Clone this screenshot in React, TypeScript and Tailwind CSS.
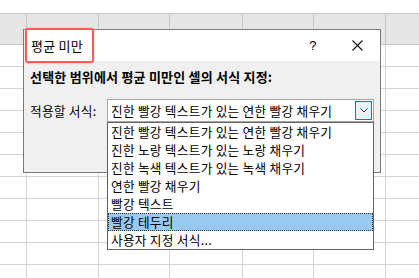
import React from "react";

const COL_WIDTHS = [
  "w-[27px]",
  "w-[72px]",
  "w-[71px]",
  "w-[73px]",
  "w-[71px]",
  "w-[72px]",
  "w-[72px]",
];

const ROWS = Array.from({ length: 11 }, (_, i) => i);

const OPTIONS = [
  "진한 빨강 텍스트가 있는 연한 빨강 채우기",
  "진한 노랑 텍스트가 있는 노랑 채우기",
  "진한 녹색 텍스트가 있는 녹색 채우기",
  "연한 빨강 채우기",
  "빨강 텍스트",
  "빨강 테두리",
  "사용자 지정 서식...",
];

const SELECTED = 5;

function Sheet() {
  return (
    <div className="flex flex-col">
      <div className="h-[14px] bg-white border-b border-[#c6c6c6]" />
      <div className="flex h-[31px] bg-[#e6e6e6] border-b border-[#c8c8c8]">
        {COL_WIDTHS.map((w, i) => (
          <div key={i} className={`${w} shrink-0 border-r border-[#c8c8c8]`} />
        ))}
      </div>
      {ROWS.map((r) => (
        <div key={r} className="flex h-[22px] border-b border-[#d4d4d4]">
          {COL_WIDTHS.map((w, i) => (
            <div key={i} className={`${w} shrink-0 border-r border-[#d4d4d4]`} />
          ))}
        </div>
      ))}
    </div>
  );
}

function CloseIcon() {
  return (
    <svg width="11" height="11" viewBox="0 0 11 11">
      <path d="M0.5 0.5 L10.5 10.5 M10.5 0.5 L0.5 10.5" stroke="#111" strokeWidth="1.1" />
    </svg>
  );
}

function Chevron() {
  return (
    <svg width="8" height="5" viewBox="0 0 8 5">
      <path d="M0.5 0.5 L4 4 L7.5 0.5" stroke="#333" strokeWidth="1" fill="none" />
    </svg>
  );
}

function Combo() {
  return (
    <div className="relative w-[267px] h-[23px]">
      <div className="flex items-center h-full bg-white border border-[#a6a6a6] pl-[3px] pr-[1px]">
        <span className="flex-1 whitespace-nowrap">{OPTIONS[0]}</span>
        <div className="w-[17px] h-[19px] flex items-center justify-center border border-[#0078d7] bg-[#e5f1fb]">
          <Chevron />
        </div>
      </div>
      {/* open dropdown list */}
      <div className="absolute left-0 top-[23px] w-[267px] h-[128px] bg-white border border-[#646464] z-10">
        {OPTIONS.map((o, i) => (
          <div
            key={o}
            className={
              i === SELECTED
                ? "h-[18px] flex items-center pl-[2px] bg-[#99c9ef] border border-dotted border-[#333] whitespace-nowrap"
                : "h-[18px] flex items-center pl-[3px] whitespace-nowrap"
            }
          >
            {o}
          </div>
        ))}
      </div>
    </div>
  );
}

function Dialog() {
  return (
    <div className="absolute left-[23px] top-[29px] w-[358px] h-[144px] border border-[#7a7a7a] bg-[#f0f0f0] flex flex-col text-[12.7px] tracking-[0.25px] text-black font-['Noto_Sans_CJK_KR',sans-serif]">
      <div className="h-[31px] bg-white flex items-center pl-[7px]">
        <span className="text-[13px] flex-1">평균 미만</span>
        <span className="text-[13px] w-[20px] text-center font-['Liberation_Sans',sans-serif]">?</span>
        <div className="w-[34px] flex items-center justify-center ml-[17px] mr-[6px]">
          <CloseIcon />
        </div>
      </div>
      <div className="flex flex-col px-[6px]">
        <div className="h-[32px] flex items-center font-bold text-[13px] tracking-[0.2px]">
          선택한 범위에서 평균 미만인 셀의 서식 지정:
        </div>
        <div className="flex items-center mt-[6px]">
          <span className="w-[77px] shrink-0">적용할 서식:</span>
          <Combo />
        </div>
      </div>
    </div>
  );
}

export default function App() {
  return (
    <div className="relative w-[419px] h-[278px] overflow-hidden bg-white">
      <Sheet />
      <Dialog />
      {/* highlight annotation around the title */}
      <div className="absolute left-[25px] top-[28px] w-[69px] h-[35px] border-2 border-[#ff5b5b] rounded-[3px] shadow-[0_0_2px_#ff9a9a] pointer-events-none" />
    </div>
  );
}
